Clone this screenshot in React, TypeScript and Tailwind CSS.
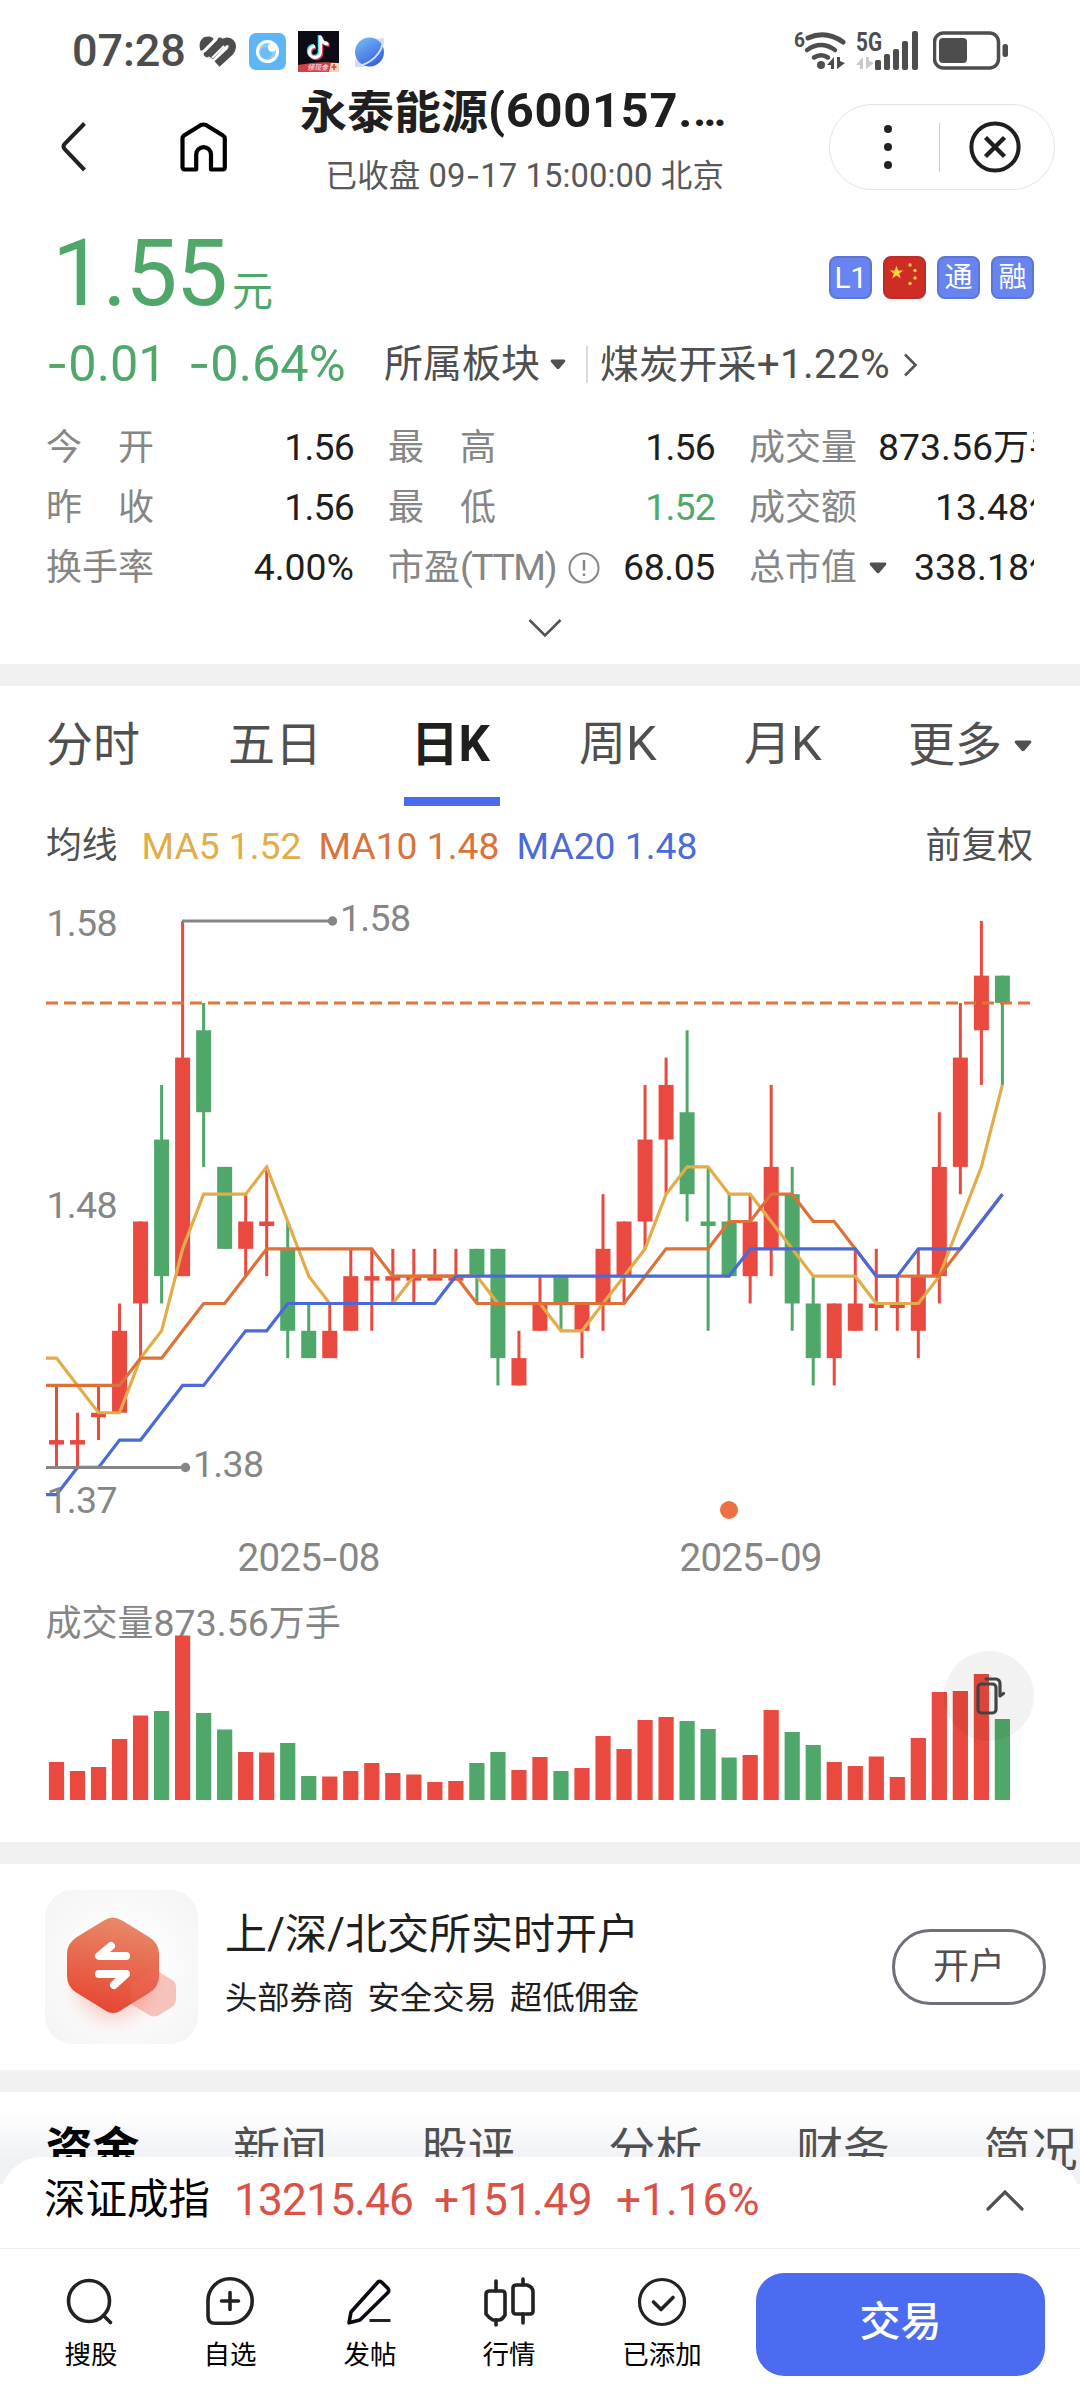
import React from "react";

const GREEN = "#50a76a";
const RED = "#e9493f";

/** Splits a string so that digits/latin are set slightly larger than CJK glyphs. */
function Mix({ children, className = "" }: { children: string; className?: string }) {
  const parts = children.match(/-|[\x00-\x2c\x2e-\x7f…]+|[^\x00-\x7f…]+/g) ?? [];
  return (
    <span className={"whitespace-pre leading-none " + className}>
      {parts.map((p, i) =>
        p === "-" ? (
          <span key={i} className="font-['Inter']">-</span>
        ) : /^[\x00-\x7f…]/.test(p) ? (
          <span key={i} className="text-[1.04em] leading-none">{p}</span>
        ) : (
          <span key={i}>{p}</span>
        )
      )}
    </span>
  );
}

function StatusBar() {
  return (
    <div className="flex h-[90px] items-start pl-[72px] pr-[71px] pt-[30px] text-[#4d4d4d]">
      <span className="mt-[-1px] w-[114px] text-[45px] leading-[44px] font-medium tracking-[-0.1px]">07:28</span>
      <svg className="ml-[13px] mt-[5px]" width="37" height="33" viewBox="0 0 37 33">
        <path d="M1 14 C-1 5 5 0 12 2 C15 3 15 4 13 6 L5 14 C3 16 1 16 1 14Z" fill="#4d4d4d" />
        <path d="M8 19 L21 6" stroke="#4d4d4d" strokeWidth="6.500" strokeLinecap="round" />
        <path d="M11 22 L23 9 C30 2 37 10 31 17 L18 29" stroke="#4d4d4d" strokeWidth="7.500" fill="none" strokeLinejoin="round" />
        <path d="M13 23 L25 11" stroke="#fff" strokeWidth="2.200" />
        <path d="M5 17 L18 4" stroke="#fff" strokeWidth="2" />
      </svg>
      <svg className="ml-[13px] mt-[3px]" width="37" height="37" viewBox="0 0 37 37">
        <rect width="37" height="37" rx="7" fill="#5fb6f7" />
        <circle cx="18.500" cy="18.500" r="10" fill="#8ccbfa" stroke="#fff" strokeWidth="3" />
        <circle cx="17" cy="20" r="6" fill="#6cbcf8" />
        <circle cx="23" cy="14.500" r="4.200" fill="#fff" />
      </svg>
      <svg className="ml-[12px] mt-[1px]" width="41" height="41" viewBox="0 0 41 41">
        <rect width="41" height="41" fill="#0d0c16" />
        <path d="M22.500 5 V21 a5.500 5.500 0 1 1 -5.500 -5.500 M22.500 6 c1 5 4 7 8 7" stroke="#3de5e0" strokeWidth="3.500" fill="none" transform="translate(-1 -1)" />
        <path d="M22.500 5 V21 a5.500 5.500 0 1 1 -5.500 -5.500 M22.500 6 c1 5 4 7 8 7" stroke="#e8385a" strokeWidth="3.500" fill="none" transform="translate(1 1)" />
        <path d="M22.500 5 V21 a5.500 5.500 0 1 1 -5.500 -5.500 M22.500 6 c1 5 4 7 8 7" stroke="#fff" strokeWidth="3.200" fill="none" />
        <path d="M0 34 Q20 30 41 32 V41 H0Z" fill="#d2404c" />
        <path d="M33 32 H41 V41 H31Z" fill="#f6d3b0" />
        <text x="9" y="39" fontSize="7" fill="#fff" fontStyle="italic" fontFamily="Noto Sans CJK SC">领现金</text>
        <path d="M36 33v6M33.500 36h5" stroke="#d2404c" strokeWidth="1.500" />
      </svg>
      <svg className="ml-[14px] mt-[6px]" width="33" height="34" viewBox="0 0 33 34">
        <defs>
          <linearGradient id="planet" x1="0" y1="0" x2="0.600" y2="1">
            <stop offset="0" stopColor="#79c0fb" />
            <stop offset="1" stopColor="#3b62dd" />
          </linearGradient>
        </defs>
        <path d="M2 22 L2 31 L11 31 M22 3 L31 2 L30 11" fill="#d3dcfa" />
        <circle cx="16.500" cy="16" r="14.500" fill="url(#planet)" />
        <path d="M5 30 C17 28 29 18 30 5" stroke="#cfe0ff" strokeWidth="2" fill="none" />
      </svg>
      <div className="flex-1" />
      <svg width="52" height="42" viewBox="0 0 52 42">
        <text x="0" y="17" fontSize="21" fontWeight="700" fontFamily="Roboto" fill="#4d4d4d" textLength="11" lengthAdjust="spacingAndGlyphs">6</text>
        <g fill="none" stroke="#4d4d4d" strokeWidth="4.500" strokeLinecap="round">
          <path d="M14 8 Q32 0 49 12" strokeWidth="5" />
          <path d="M13 20 Q27 10 41 20" />
          <path d="M20 27.500 Q27 23 34 27.500" />
        </g>
        <circle cx="27" cy="35" r="4" fill="#4d4d4d" />
        <path d="M33 35 L40 27 V39 H37 V35Z M43 27 h3 v4 L51 33 L43 39Z" fill="#4d4d4d" />
      </svg>
      <svg className="ml-[10px]" width="64" height="42" viewBox="0 0 64 42">
        <text x="0" y="20.500" fontSize="26" fontWeight="700" fontFamily="Roboto" fill="#4d4d4d" textLength="26" lengthAdjust="spacingAndGlyphs">5G</text>
        <path d="M0 35 L7 27 V39 H4 V35Z M10 27 h3 v4 L18 33 L10 39Z" fill="#c9c9c9" />
        <g fill="#4d4d4d">
          <rect x="19" y="30" width="6" height="10" rx="1.500" />
          <rect x="28" y="24" width="6" height="16" rx="2" />
          <rect x="37" y="19" width="6" height="21" rx="2" />
          <rect x="46" y="11" width="6" height="29" rx="2" />
          <rect x="56" y="1" width="6" height="39" rx="2" />
        </g>
      </svg>
      <svg className="ml-[13px]" width="76" height="42" viewBox="0 0 76 42">
        <rect x="1.500" y="3" width="64" height="35" rx="9" fill="none" stroke="#4d4d4d" strokeWidth="3.500" />
        <rect x="6" y="8" width="28" height="25" rx="4" fill="#4d4d4d" />
        <rect x="69.500" y="14" width="5.500" height="13" rx="2.500" fill="#4d4d4d" />
      </svg>
    </div>
  );
}

function Header() {
  return (
    <div className="flex h-[130px] items-start pl-[58px] pr-[25px]">
      <svg className="mt-[31px]" width="30" height="52" viewBox="0 0 30 52" fill="none" stroke="#222" strokeWidth="4">
        <path d="M26.500 2.500 L6.500 23 Q4.500 25.500 6.500 28 L26.500 49" />
      </svg>
      <svg className="ml-[90px] mt-[31px]" width="52" height="52" viewBox="0 0 52 52" fill="none" stroke="#000" strokeWidth="4.200" strokeLinejoin="round">
        <path d="M4.500 17.500 Q4.500 15.500 6 14.500 L23 4 Q25.500 3 28 4 L45 14.500 Q46.800 15.500 46.800 17.500 V46 Q46.800 48.500 44.500 48.500 H33 V33.500 A7.400 7.400 0 0 0 18.200 33.500 V48.500 H6.800 Q4.500 48.500 4.500 46Z" />
      </svg>
      <div className="ml-[70px] flex h-[120px] w-[430px] flex-col overflow-hidden">
        <div className="mt-[-5px] flex h-[52px] w-full items-center font-bold text-[#1f1f1f]">
          <Mix className="text-[47px]">永泰能源</Mix>
          <Mix className="text-[47px] tracking-[0.7px]">(600157.</Mix>
          <Mix className="text-[43px] tracking-[-1px]">…</Mix>
        </div>
        <div className="mt-[14px] flex h-[50px] items-center justify-end pr-[6px] text-[#585858]">
          <Mix className="text-[31.500px] tracking-[0.1px]">已收盘 09-17 15:00:00 北京</Mix>
        </div>
      </div>
      <div className="flex-1" />
      <div className="mt-[14px] flex h-[86px] w-[226px] items-center rounded-full border border-[#e4e4e4]">
        <div className="flex w-[109px] flex-col items-center gap-[10px] pl-[7px]">
          <i className="size-[8px] rounded-full bg-[#222]" />
          <i className="size-[8px] rounded-full bg-[#222]" />
          <i className="size-[8px] rounded-full bg-[#222]" />
        </div>
        <div className="h-[49px] w-px bg-[#ccc]" />
        <svg className="ml-[28px]" width="54" height="54" viewBox="0 0 54 54" fill="none" stroke="#1f1f1f" strokeWidth="4">
          <circle cx="27" cy="27" r="23.600" />
          <path d="M17.500 17.500 L36.500 36.500 M36.500 17.500 L17.500 36.500" strokeWidth="4.400" />
        </svg>
      </div>
    </div>
  );
}

function Badge({ children }: { children: React.ReactNode }) {
  return (
    <div className="flex size-[43px] items-center justify-center rounded-[8px] border-2 border-[#5c76d8] bg-[#6784f0] text-[28px] leading-none text-white">
      {children}
    </div>
  );
}

function Down({ w, h, className = "" }: { w: number; h: number; className?: string }) {
  return (
    <svg className={className} width={w} height={h} viewBox="0 0 18 12">
      <path d="M2 0.500 H16 Q18 1 17 3 L10.500 10.500 Q9 12 7.500 10.500 L1 3 Q0 1 2 0.500Z" fill="#505050" />
    </svg>
  );
}

function Quote() {
  const label = "text-[36px] text-[#868686]";
  const val = "text-[36px] text-[#1f1f1f]";
  return (
    <div className="h-[444px] pl-[46px] pr-[46px] text-[#50a76a]">
      <div className="flex h-[97px] items-start">
        <span className="ml-[6px] mt-[7px] w-[176px] text-[93px] leading-[93px] tracking-[-1.800px]">1.55</span>
        <span className="ml-[4px] mt-[52px] text-[41px] leading-[41px]">元</span>
        <div className="flex-1" />
        <div className="mt-[36px] flex gap-[11px]">
          <Badge><span className="text-[30px] tracking-[-0.5px]">L1</span></Badge>
          <div className="size-[43px] rounded-[8px] border-2 border-[#b92f28] bg-[#cf2c26]">
            <svg width="39" height="39" viewBox="0 0 39 39" fill="#fbd13f">
              <path d="M11.500 7.500 l1.700 5 h5.200 l-4.200 3.100 1.600 5 -4.300 -3.100 -4.300 3.100 1.600 -5 -4.200 -3.100 h5.200z" />
              <circle cx="25" cy="7" r="1.700" />
              <circle cx="30" cy="12.500" r="1.700" />
              <circle cx="30" cy="20" r="1.700" />
              <circle cx="25" cy="25.500" r="1.700" />
            </svg>
          </div>
          <Badge>通</Badge>
          <Badge>融</Badge>
        </div>
      </div>
      <div className="flex h-[92px] items-center pt-[3px]">
        <Mix className="w-[142px] text-[48.500px]">-0.01</Mix>
        <Mix className="w-[196px] text-[48.500px]">-0.64%</Mix>
        <Mix className="text-[39px] text-[#4f4f4f]">所属板块</Mix>
        <Down w={16} h={11} className="ml-[10px]" />
        <div className="ml-[20px] h-[37px] w-[2px] bg-[#dcdcdc]" />
        <Mix className="ml-[12px] text-[39px] tracking-[0.2px] text-[#4f4f4f]">煤炭开采+1.22%</Mix>
        <svg className="ml-[13px]" width="15" height="24" viewBox="0 0 15 24" fill="none" stroke="#555" strokeWidth="2.600">
          <path d="M2 1.500 L12.500 12 L2 22.500" />
        </svg>
      </div>
      <div className="mt-[9px] flex gap-[34px] overflow-hidden">
        <div className="w-[308px] shrink-0">
          {[["今　开", "1.56"], ["昨　收", "1.56"], ["换手率", "4.00%"]].map(([a, b]) => (
            <div key={a} className="flex h-[60px] items-center justify-between">
              <Mix className={label}>{a}</Mix>
              <Mix className={val + (b.length < 5 ? " tracking-[-0.800px]" : "")}>{b}</Mix>
            </div>
          ))}
        </div>
        <div className="w-[327px] shrink-0">
          <div className="flex h-[60px] items-center justify-between">
            <Mix className={label}>最　高</Mix>
            <Mix className={val + " tracking-[-0.800px]"}>1.56</Mix>
          </div>
          <div className="flex h-[60px] items-center justify-between">
            <Mix className={label}>最　低</Mix>
            <Mix className="text-[36px] tracking-[-0.800px] text-[#50a76a]">1.52</Mix>
          </div>
          <div className="flex h-[60px] items-center">
            <Mix className={label}>市盈</Mix>
            <Mix className={label + " tracking-[-1.500px]"}>(TTM)</Mix>
            <svg className="ml-[12px] shrink-0" width="32" height="32" viewBox="0 0 32 32" fill="none" stroke="#868686" strokeWidth="2">
              <circle cx="16" cy="16" r="14.500" />
              <path d="M16 8 V18.500 M16 21.500 V24" strokeWidth="2.400" />
            </svg>
            <Mix className={val + " ml-auto tracking-[-0.400px]"}>68.05</Mix>
          </div>
        </div>
        <div className="w-[316px] shrink-0">
          <div className="flex h-[60px] items-center justify-between">
            <Mix className={label}>成交量</Mix>
            <Mix className={val}>873.56万手</Mix>
          </div>
          <div className="flex h-[60px] items-center justify-between">
            <Mix className={label}>成交额</Mix>
            <Mix className={val}>13.48亿</Mix>
          </div>
          <div className="flex h-[60px] items-center">
            <Mix className={label}>总市值</Mix>
            <Down w={18} h={12} className="ml-[12px]" />
            <Mix className={val + " ml-auto"}>338.18亿</Mix>
          </div>
        </div>
      </div>
      <svg className="ml-[482px] mt-[20px]" width="34" height="20" viewBox="0 0 34 20" fill="none" stroke="#555" strokeWidth="2.600">
        <path d="M1.500 2 L17 17.500 L32.500 2" />
      </svg>
    </div>
  );
}

function ChartTabs() {
  return (
    <div className="h-[124px] pl-[46px] pr-[48px]">
      <div className="flex h-[111px] items-center pt-[6px] text-[47px] text-[#505050]">
        <Mix className="w-[182px]">分时</Mix>
        <Mix className="w-[183px]">五日</Mix>
        <Mix className="w-[168px] text-[47.500px] font-bold text-[#1f1f1f]">日K</Mix>
        <Mix className="w-[165px]">周K</Mix>
        <Mix className="w-[164px]">月K</Mix>
        <Mix>更多</Mix>
        <Down w={18} h={12} className="ml-auto mt-[3px] shrink-0" />
      </div>
      <div className="ml-[358px] h-[9px] w-[96px] bg-[#4b6cef]" />
    </div>
  );
}

function MaRow() {
  return (
    <div className="flex h-[70px] items-center pl-[46px] pr-[47px] pt-[4px] text-[35.800px]">
      <Mix className="text-[#505050]">均线</Mix>
      <Mix className="ml-[24px] w-[177px] text-[#e2ac4a]">MA5 1.52</Mix>
      <Mix className="w-[198px] text-[#d9733c]">MA10 1.48</Mix>
      <Mix className="text-[#4b6bda]">MA20 1.48</Mix>
      <Mix className="ml-auto text-[#505050]">前复权</Mix>
    </div>
  );
}

// Each entry: rising?, high, body top, body bottom, low (cents below 1.58), volume bar height
const candles: [number, number, number, number, number, number][] = [
  [1, 17, 19, 19, 20, 38], [1, 18, 19, 19, 20, 29], [1, 17, 18, 18, 19, 33], [1, 14, 15, 18, 18, 61],
  [1, 11, 11, 14, 16, 84.5], [0, 6, 8, 13, 14, 89], [1, 0, 5, 13, 13, 164.5], [0, 3, 4, 7, 9, 87],
  [0, 9, 9, 12, 12, 70.5], [1, 10, 11, 12, 13, 48], [1, 9, 11, 11, 13, 47.5], [0, 11, 12, 15, 16, 57],
  [0, 14, 15, 16, 16, 24], [1, 14, 15, 16, 16, 23.5], [1, 12, 13, 15, 15, 29], [1, 12, 13, 13, 15, 37],
  [1, 12, 13, 13, 14, 27], [1, 12, 13, 13, 14, 25.5], [1, 12, 13, 13, 13, 18], [1, 12, 13, 13, 13, 19],
  [0, 12, 12, 13, 14, 37], [0, 12, 12, 16, 17, 48], [1, 15, 16, 17, 17, 30], [1, 13, 14, 15, 15, 43],
  [0, 13, 13, 14, 15, 29], [1, 14, 14, 15, 16, 32], [1, 10, 12, 14, 15, 64], [1, 11, 11, 13, 14, 51],
  [1, 6, 8, 11, 12, 80], [1, 5, 6, 8, 10, 83], [0, 4, 7, 10, 11, 79], [0, 9, 11, 11, 15, 71],
  [0, 10, 11, 13, 13, 42.5], [1, 10, 11, 13, 14, 45], [1, 6, 9, 12, 13, 90], [0, 9, 10, 14, 15, 68],
  [0, 13, 14, 16, 17, 55], [1, 14, 14, 16, 17, 38], [1, 12, 14, 15, 15, 34], [1, 12, 14, 14, 15, 43.5],
  [1, 13, 14, 14, 15, 23], [1, 12, 13, 15, 16, 62], [1, 7, 9, 13, 14, 108], [1, 3, 5, 9, 10, 109],
  [1, 0, 2, 4, 6, 126], [0, 2, 2, 3, 6, 81],
];
const ma5 = [16, 17, 18, 18, 16, 15, 12, 10, 10, 10, 9, 11, 13, 14, 14, 14, 14, 13, 13, 13, 13, 14, 14, 14, 15, 15, 14, 13, 12, 10, 9, 9, 10, 10, 11, 12, 13, 13, 13, 14, 14, 14, 13, 11, 9, 6];
const ma10 = [17, 17, 17, 17, 16, 16, 15, 14, 14, 13, 12, 12, 12, 12, 12, 12, 13, 13, 13, 13, 14, 14, 14, 14, 14, 14, 14, 14, 13, 12, 12, 12, 11, 11, 10, 10, 11, 11, 12, 13, 13, 13, 13, 12, 11, 10];
const ma20 = [21, 20, 20, 19, 19, 18, 17, 17, 16, 15, 15, 14, 14, 14, 14, 14, 14, 14, 14, 13, 13, 13, 13, 13, 13, 13, 13, 13, 13, 13, 13, 13, 13, 12, 12, 12, 12, 12, 12, 13, 13, 12, 12, 12, 11, 10];

const cx = (i: number) => 56.5 + 21.02 * i;
const ky = (k: number) => 41 + 27.32 * k;
const line = (a: number[]) => `46,${ky(a[0])} ` + a.map((k, i) => `${cx(i)},${ky(k)}`).join(" ");

function Chart() {
  return (
    <div className="relative h-[962px]">
      <svg width="1080" height="962" viewBox="0 0 1080 962" fontFamily="Roboto, 'Noto Sans CJK SC', sans-serif" fontSize="37.500" fill="#868686">
        <g>
          {candles.map(([up, h, t, b, l], i) => (
            <g key={i} fill={up ? RED : GREEN} stroke="none">
              <rect x={cx(i) - 1.5} y={ky(h)} width="3" height={ky(l) - ky(h)} />
              <rect x={cx(i) - 7.5} y={ky(t)} width="15" height={Math.max(4.5, ky(b) - ky(t))} />
            </g>
          ))}
        </g>
        <path d="M46 123 H1031" stroke="#e2733c" strokeWidth="3.200" strokeDasharray="12 6" />
        <g fill="none" strokeWidth="3.200">
          <polyline points={line(ma5)} stroke="#e2ac4a" />
          <polyline points={line(ma10)} stroke="#dc7238" />
          <polyline points={line(ma20)} stroke="#4c69d8" />
        </g>
        <path d="M182 41 H333 M46 587.500 H186" stroke="#868686" strokeWidth="3" />
        <circle cx="332.500" cy="41" r="4.700" />
        <circle cx="185.500" cy="587.500" r="4.700" />
        <text x="46.500" y="56" textLength="71">1.58</text>
        <text x="46.500" y="338" textLength="71">1.48</text>
        <text x="46.500" y="633" textLength="71">1.37</text>
        <text x="340" y="51" textLength="71">1.58</text>
        <text x="193" y="597" textLength="71">1.38</text>
        <circle cx="729" cy="630" r="9" fill="#ec7044" />
        <text x="237.500" y="691" fontSize="38.500" textLength="143">2025<tspan fontFamily="Inter">-</tspan>08</text>
        <text x="679.500" y="691" fontSize="38.500" textLength="143">2025<tspan fontFamily="Inter">-</tspan>09</text>
        <text x="45.500" y="755.500" fontSize="36">成交量<tspan fontSize="37.500">873.56</tspan>万手</text>
        {candles.map((c, i) => (
          <rect key={i} x={cx(i) - 7.6} y={920 - c[5]} width="15.200" height={c[5]} fill={c[0] ? RED : GREEN} />
        ))}
      </svg>
      <div className="absolute left-[944px] top-[771px] size-[90px] rounded-full bg-black/5">
        <svg width="90" height="90" viewBox="0 0 90 90" fill="none" stroke="#444" strokeWidth="3.200" strokeLinecap="round" strokeLinejoin="round">
          <rect x="34" y="33" width="18" height="29" rx="3.500" />
          <path d="M42 28 H52 Q56 28.500 56 33 V45 L59.500 42.500" />
        </svg>
      </div>
    </div>
  );
}

function Promo() {
  return (
    <div className="flex h-[206px] items-center pl-[45px] pr-[34px]">
      <svg width="153" height="154" viewBox="0 0 153 154">
        <defs>
          <radialGradient id="tile" r="0.700">
            <stop offset="0.400" stopColor="#fdfcfc" />
            <stop offset="1" stopColor="#f3f3f3" />
          </radialGradient>
          <linearGradient id="hex" x1="0.600" y1="0" x2="0.400" y2="1">
            <stop offset="0" stopColor="#e98a69" />
            <stop offset="1" stopColor="#e64531" />
          </linearGradient>
          <filter id="soft" x="-50%" y="-50%" width="200%" height="200%">
            <feGaussianBlur stdDeviation="8" />
          </filter>
        </defs>
        <rect width="153" height="154" rx="28" fill="url(#tile)" />
        <circle cx="68" cy="92" r="40" fill="#f08070" opacity="0.300" filter="url(#soft)" />
        <path d="M58 31 Q67.500 24 78 31 L104 47 Q114 53 114 64 V86 Q114 97 104 103 L78 119 Q68 127 58 119 L32 103 Q22 97 22 86 V64 Q22 53 32 47Z" fill="url(#hex)" />
        <path d="M104 82 Q109 79 114 82 L127 90 Q131 92 131 97 V109 Q131 114 127 117 L114 125 Q109 128 104 125 L91 117 Q86 114 86 109 V97 Q86 92 91 90Z" fill="#ee6a58" opacity="0.380" />
        <g fill="none" stroke="#fff" strokeWidth="8" strokeLinecap="round" strokeLinejoin="round">
          <path d="M66 56 L54 66 H81" />
          <path d="M54 84 H81 L69 95" />
        </g>
      </svg>
      <div className="ml-[27px] flex flex-col">
        <Mix className="mt-[-7px] text-[42px] text-[#1f1f1f]">上/深/北交所实时开户</Mix>
        <Mix className="mt-[24px] text-[32.300px] text-[#1f1f1f] [word-spacing:5px]">头部券商 安全交易 超低佣金</Mix>
      </div>
      <div className="ml-auto flex h-[76px] w-[154px] items-center justify-center rounded-full border-[3px] border-[#6f7078] text-[36px] leading-none text-[#505050]">
        开户
      </div>
    </div>
  );
}

function InfoTabs() {
  return (
    <div className="flex h-[92px] items-start gap-[93.600px] overflow-hidden bg-linear-to-b from-white from-20% to-[#eff1f5] to-75% pl-[45.500px] pt-[34px] text-[47px] leading-[47px] text-[#505050]">
      <span className="shrink-0 font-bold text-black">资金</span>
      {["新闻", "股评", "分析", "财务", "简况"].map((t) => (
        <span key={t} className="shrink-0">{t}</span>
      ))}
    </div>
  );
}

function IndexBar() {
  return (
    <div className="relative mt-[-27px] flex h-[92px] items-center rounded-t-[42px] border-b border-[#ececec] bg-white pb-[5px] pl-[44px] pr-[55px]">
      <Mix className="text-[41.500px] text-black">深证成指</Mix>
      <Mix className="ml-[24px] w-[200px] text-[42.500px] tracking-[-0.800px] text-[#da5148]">13215.46</Mix>
      <Mix className="w-[182px] text-[42.500px] tracking-[-0.400px] text-[#da5148]">+151.49</Mix>
      <Mix className="text-[42.500px] text-[#da5148]">+1.16%</Mix>
      <svg className="ml-auto mt-[2px]" width="40" height="24" viewBox="0 0 40 24" fill="none" stroke="#505050" strokeWidth="3.200" strokeLinecap="round">
        <path d="M3 20 L20 3 L37 20" />
      </svg>
    </div>
  );
}

function NavItem({ label, className, children }: { label: string; className: string; children: React.ReactNode }) {
  return (
    <div className={"flex flex-col items-center pt-px text-[26.500px] leading-[30px] text-black " + className}>
      <svg width="54" height="54" viewBox="0 0 54 54" fill="none" stroke="#222" strokeWidth="3.600" strokeLinecap="round" strokeLinejoin="round">
        {children}
      </svg>
      <span className="mt-[12px]">{label}</span>
    </div>
  );
}

function BottomNav() {
  return (
    <div className="flex h-[151px] items-start bg-white pl-[45px] pr-[35px] pt-[24px]">
      <NavItem label="搜股" className="w-[92px]">
        <circle cx="25" cy="27" r="20.500" />
        <path d="M39.500 41.500 L46.500 48.500" />
      </NavItem>
      <NavItem label="自选" className="ml-[47px] w-[92px]">
        <path d="M27 4.800 A22 22 0 0 1 27 49.200 H12 Q5 49.200 5 42 V27 A22 22 0 0 1 27 4.800Z" />
        <path d="M27 18.500 V35.500 M18.500 27 H35.500" />
      </NavItem>
      <NavItem label="发帖" className="ml-[48px] w-[92px]">
        <path d="M35 8 Q37 6.500 39 8.500 L45 14.500 Q46.500 16.500 45 18.500 L17 46 L6 48.800 L8 38Z" stroke="#0a0a14" />
        <path d="M28 46.500 H46" strokeLinecap="square" strokeWidth="3" />
      </NavItem>
      <NavItem label="行情" className="ml-[47px] w-[92px]">
        <path d="M8 17 H20 Q23 17 23 20 V41 Q20 46 17 46 H11 Q7 44 4 40 V20 Q4 17 8 17Z" />
        <path d="M14 7 V17 M14 46 V51 M41 5 V11 M41 40 V49" />
        <path d="M35 11 H45 Q51 13 51 18 V37 Q51 40 48 40 H34 Q31 40 31 37 V14 Q31 11 35 11Z" />
      </NavItem>
      <NavItem label="已添加" className="ml-[61px] w-[92px]">
        <circle cx="27" cy="28" r="22.500" strokeWidth="3.200" />
        <path d="M18.500 28 L26 35.500 L38 23.500" />
      </NavItem>
      <div className="ml-auto flex h-[103px] w-[289px] items-center justify-center rounded-[28px] bg-[#4b6cf0] pb-[5px] text-[41px] leading-none font-medium text-white">
        交易
      </div>
    </div>
  );
}

const Band = () => <div className="h-[22px] bg-[#f1f1f1]" />;

export default function App() {
  return (
    <div className="h-[2400px] w-[1080px] overflow-hidden bg-white font-['Roboto','Noto_Sans_CJK_SC',sans-serif]">
      <StatusBar />
      <Header />
      <Quote />
      <Band />
      <ChartTabs />
      <MaRow />
      <Chart />
      <Band />
      <Promo />
      <Band />
      <InfoTabs />
      <IndexBar />
      <BottomNav />
    </div>
  );
}
